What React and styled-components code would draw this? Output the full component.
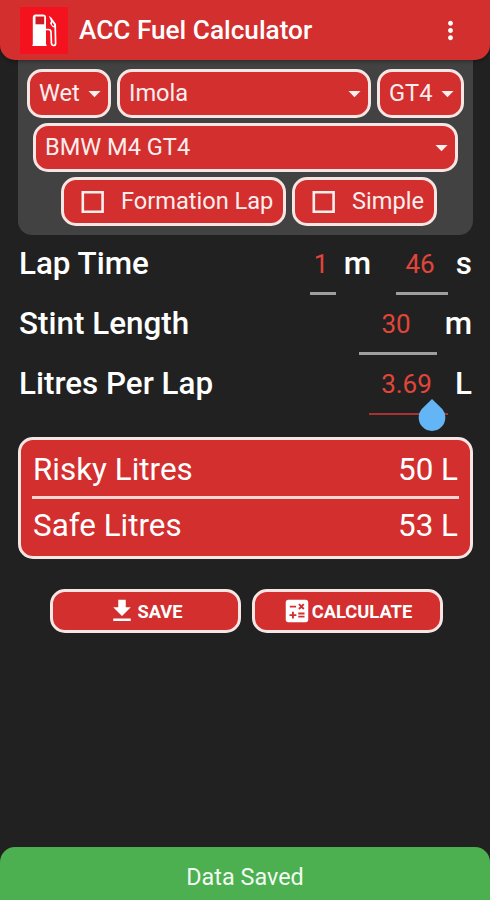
import React from "react";
import styled, { createGlobalStyle } from "styled-components";
import {
  MdArrowDropDown,
  MdCalculate,
  MdFileDownload,
  MdMoreVert,
} from "react-icons/md";

const colors = {
  background: "#212121",
  panel: "#424242",
  primary: "#d32f2f",
  logo: "#f5121f",
  border: "#f8e6e4",
  value: "#e2453a",
  success: "#4caf50",
  handle: "#64b5f6",
};

const GlobalStyle = createGlobalStyle`
  * {
    box-sizing: border-box;
  }
  body {
    margin: 0;
    background: ${colors.background};
    font-family: Roboto, "Liberation Sans", sans-serif;
    color: #fff;
  }
`;

const Screen = styled.div`
  display: flex;
  flex-direction: column;
  height: 900px;
  overflow: hidden;
`;

const Header = styled.header`
  display: flex;
  align-items: center;
  height: 60px;
  padding: 0 25px 0 20px;
  background: ${colors.primary};
  border-radius: 0 0 15px 15px;
  box-shadow: 0 1px 4px rgba(0, 0, 0, 0.4);
  z-index: 1;
`;

const Logo = styled.div`
  width: 48px;
  height: 47px;
  background: ${colors.logo};

  svg {
    display: block;
  }
`;

const Title = styled.h1`
  flex: 1;
  margin: 0 0 0 11px;
  font-size: 26.2px;
  font-weight: 500;
  line-height: 60px;
`;

const MenuButton = styled.button`
  display: flex;
  padding: 0;
  border: none;
  background: none;
  color: #fff;
  font-size: 29px;
`;

const Options = styled.section`
  display: flex;
  flex-direction: column;
  align-items: center;
  gap: 5px;
  height: 175px;
  margin: 0 17px 0 18px;
  padding-top: 9px;
  background: ${colors.panel};
  border-radius: 0 0 14px 14px;
`;

const OptionRow = styled.div`
  display: flex;
  gap: 6px;
  padding-left: ${(props) => props.$indent || 0}px;
`;

const Chip = styled.button`
  display: flex;
  align-items: center;
  width: ${(props) => props.$width}px;
  height: 49px;
  padding: 0;
  border: 3px solid ${colors.border};
  border-radius: 15px;
  background: ${colors.primary};
  color: #fdeeee;
  font-family: inherit;
  font-size: 23.6px;
  line-height: 43px;
  white-space: nowrap;
`;

const Select = styled(Chip)`
  justify-content: space-between;
  padding: 0 0 0 9px;

  svg {
    flex-shrink: 0;
    width: 29px;
    height: 29px;
    margin: 0 -1px 0 -4px;
  }
`;

const Toggle = styled(Chip)`
  gap: 17px;
  padding-left: 17px;
`;

const Fields = styled.section`
  padding: 0 18px 0 19px;
`;

const Field = styled.div`
  display: flex;
  height: 60px;
  font-size: 31.4px;
  font-weight: 500;
  line-height: 58px;
`;

const Label = styled.div`
  flex: 1;
`;

const Value = styled.div`
  position: relative;
  width: ${(props) => props.$width}px;
  height: 60px;
  padding-right: 4px;
  border-bottom: ${(props) =>
    props.$active ? "2px solid #a83232" : "3px solid #9e9e9e"};
  color: ${colors.value};
  font-size: 26px;
  font-weight: 400;
  text-align: center;
`;

const Unit = styled.div`
  width: ${(props) => props.$width}px;
  text-align: right;
`;

const Gap = styled.div`
  width: 25px;
`;

const Handle = styled.svg`
  position: absolute;
  left: 49px;
  top: 44px;
`;

const Results = styled.section`
  height: 122px;
  margin: 22px 17px 0 18px;
  padding: 0 11px;
  border: 3px solid ${colors.border};
  border-radius: 15px;
  background: ${colors.primary};
`;

const Result = styled.div`
  display: flex;
  justify-content: space-between;
  height: 59px;
  padding: 0 1px;
  font-size: 31.4px;
  line-height: 54px;

  &:first-child {
    border-bottom: 3px solid #fbd5d3;
    line-height: 59px;
  }
`;

const Actions = styled.div`
  display: flex;
  justify-content: center;
  gap: 11px;
  margin-top: 30px;
  padding-left: 2px;
`;

const Action = styled.button`
  display: flex;
  align-items: center;
  justify-content: center;
  width: 191px;
  height: 44px;
  padding: 0;
  border: 3px solid ${colors.border};
  border-radius: 15px;
  background: ${colors.primary};
  color: #fff;
  font-family: inherit;
  font-size: 18.3px;
  font-weight: 700;

  svg {
    width: 30px;
    height: 30px;
  }
`;

const Toast = styled.div`
  height: 53px;
  margin-top: auto;
  border-radius: 15px 15px 0 0;
  background: ${colors.success};
  color: #f1fbf1;
  font-size: 23.4px;
  line-height: 60px;
  text-align: center;
`;

const FuelPump = () => (
  <svg width="48" height="47" viewBox="0 0 48 47" fill="none">
    <path
      fill="#fff"
      d="M15.500 7.500h7.500a3 3 0 0 1 3 3V37l.8 2H12.300l.5-2V10.500a3 3 0 0 1 2.700-3z"
    />
    <path fill="#cf1a24" d="M15.500 9.500h8.700v7.800h-8.700z" />
    <path fill="#fff" d="M28.800 8.800l2.400 1.700 4.800 6.500V21l-3.500-1-2.500-3.500 1-2.500z" />
    <path fill={colors.logo} d="M32 15.200l2 2.300v1.800l-2-1.500z" />
    <path
      stroke="#fff"
      strokeWidth="1.700"
      strokeLinejoin="round"
      d="M35.200 18l.4 18.500a2 2 0 0 1-2 2q-2 0-2.200-2.500L31 25q-.2-2.500-2.500-2.500H26"
    />
  </svg>
);

const EmptyBox = () => (
  <svg width="23" height="22" viewBox="0 0 23 22" fill="none">
    <path stroke="#fdeeee" strokeWidth="2.600" d="M1.800 1.300h19.800v19.400H1.800z" />
  </svg>
);

export default function App() {
  return (
    <Screen>
      <GlobalStyle />
      <Header>
        <Logo>
          <FuelPump />
        </Logo>
        <Title>ACC Fuel Calculator</Title>
        <MenuButton aria-label="Menu">
          <MdMoreVert />
        </MenuButton>
      </Header>
      <Options>
        <OptionRow>
          <Select $width={84}>
            Wet <MdArrowDropDown />
          </Select>
          <Select $width={254}>
            Imola <MdArrowDropDown />
          </Select>
          <Select $width={87}>
            GT4 <MdArrowDropDown />
          </Select>
        </OptionRow>
        <OptionRow>
          <Select $width={425}>
            BMW M4 GT4 <MdArrowDropDown />
          </Select>
        </OptionRow>
        <OptionRow $indent={7}>
          <Toggle $width={225}>
            <EmptyBox /> Formation Lap
          </Toggle>
          <Toggle $width={145}>
            <EmptyBox /> Simple
          </Toggle>
        </OptionRow>
      </Options>
      <Fields>
        <Field>
          <Label>Lap Time</Label>
          <Value $width={26}>1</Value>
          <Unit $width={35}>m</Unit>
          <Gap />
          <Value $width={52}>46</Value>
          <Unit $width={24}>s</Unit>
        </Field>
        <Field>
          <Label>Stint Length</Label>
          <Value $width={78}>30</Value>
          <Unit $width={35}>m</Unit>
        </Field>
        <Field>
          <Label>Litres Per Lap</Label>
          <Value $width={79} $active>
            3.69
            <Handle width="28" height="32" viewBox="0 0 28 32">
              <path
                fill={colors.handle}
                d="M14 0l9.500 9.300a13.300 13.300 0 1 1-19 0z"
              />
            </Handle>
          </Value>
          <Unit $width={24}>L</Unit>
        </Field>
      </Fields>
      <Results>
        <Result>
          <span>Risky Litres</span>
          <span>50 L</span>
        </Result>
        <Result>
          <span>Safe Litres</span>
          <span>53 L</span>
        </Result>
      </Results>
      <Actions>
        <Action>
          <MdFileDownload /> SAVE
        </Action>
        <Action>
          <MdCalculate /> CALCULATE
        </Action>
      </Actions>
      <Toast>Data Saved</Toast>
    </Screen>
  );
}
